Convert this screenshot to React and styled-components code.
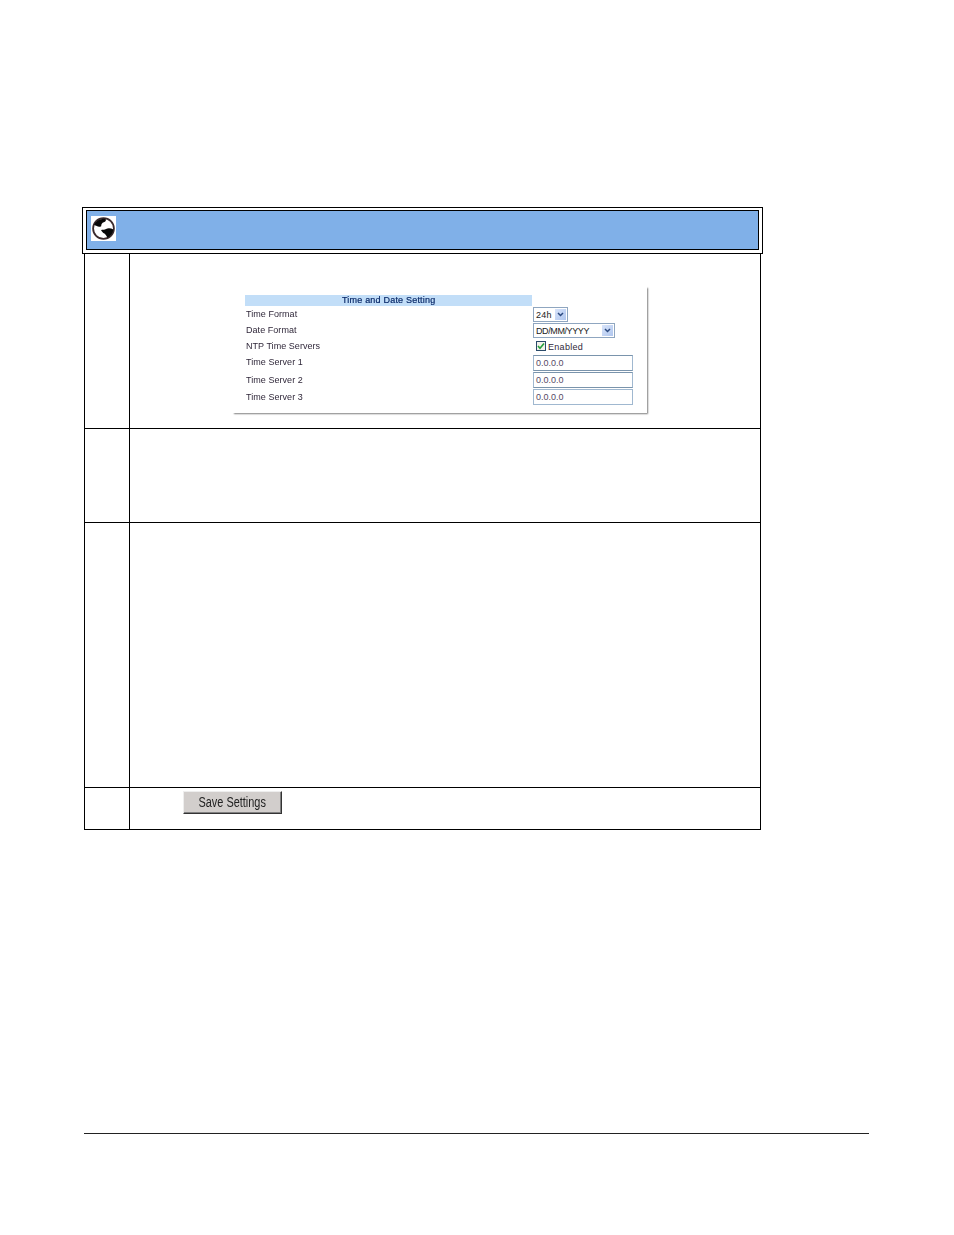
import React from "react";
import styled, { createGlobalStyle } from "styled-components";

const Global = createGlobalStyle`
  html, body { margin: 0; padding: 0; background: #fff; }
  body { font-family: "Liberation Sans", Arial, sans-serif; }
`;

const Page = styled.div`
  width: 954px;
  height: 1235px;
  box-sizing: border-box;
  padding: 207px 0 0 82px;
  display: flex;
  flex-direction: column;
`;

const HeaderFrame = styled.div`
  width: 681px;
  height: 47px;
  box-sizing: border-box;
  border: 1px solid #000;
  padding: 2px 3px 3px 3px;
`;

const HeaderBar = styled.div`
  height: 100%;
  box-sizing: border-box;
  border: 1px solid #000;
  background: #80b0e8;
  padding: 5px 4px;
  display: flex;
  align-items: flex-start;
`;

const Table = styled.div`
  width: 677px;
  margin-left: 2px;
  box-sizing: border-box;
  border-left: 1px solid #000;
  border-right: 1px solid #000;
`;

const Row = styled.div`
  height: ${(props) => props.h}px;
  box-sizing: border-box;
  border-bottom: 1px solid #000;
  display: grid;
  grid-template-columns: 45px 1fr;
`;

const StepCell = styled.div`
  border-right: 1px solid #000;
`;

const BodyCell = styled.div`
  padding: ${(props) => props.pad || "0"};
`;

const Card = styled.div`
  width: 415px;
  height: 127px;
  box-sizing: border-box;
  padding: 9px 0 0 13px;
  background: #fff;
  box-shadow: 1.5px 1.5px 1.5px -0.5px #808080;
  display: grid;
  grid-template-columns: 288px 1fr;
  grid-template-rows: 11px 17px 16px 16px 17px 17px 17px;
`;

const Banner = styled.div`
  width: 287px;
  background: #c2def8;
  color: #0a2a6a;
  font-size: 9px;
  line-height: 11px;
  letter-spacing: 0.2px;
  padding-left: 97px;
  box-sizing: border-box;
  -webkit-text-stroke: 0.2px #0a2a6a;
  white-space: nowrap;
  filter: blur(0.25px);
`;

const Label = styled.div`
  color: #30283a;
  font-size: 9px;
  letter-spacing: 0.05px;
  line-height: ${(props) => props.lh || 16}px;
  padding-left: 1px;
  white-space: nowrap;
  filter: blur(0.25px);
`;

const Control = styled.div`
  display: flex;
  align-items: flex-start;
  padding-top: ${(props) => props.top || 0}px;
`;

const Select = styled.div`
  width: ${(props) => props.w}px;
  height: 15px;
  box-sizing: border-box;
  border: 1px solid #8fa6c0;
  display: flex;
  align-items: center;
  justify-content: space-between;
  padding: 0 1px 0 2px;
  color: #222;
  font-size: 9px;
  letter-spacing: ${(props) => props.ls || 0}px;
  white-space: nowrap;
`;

const Arrow = styled.span`
  width: 11px;
  height: 11px;
  background: linear-gradient(135deg, #d8e4fa, #b0c6ee);
  display: flex;
  align-items: center;
  justify-content: center;
`;

const CheckLine = styled.div`
  display: flex;
  align-items: flex-start;
  gap: 2px;
  padding: 2px 0 0 3px;
  color: #30283a;
  font-size: 9px;
  letter-spacing: 0.3px;
  line-height: 12px;
`;

const CheckBox = styled.span`
  width: 10px;
  height: 10px;
  box-sizing: border-box;
  border: 1px solid #2a4a6a;
  background: #f2f2ea;
  display: flex;
  align-items: center;
  justify-content: center;
`;

const Field = styled.div`
  width: 100px;
  height: 16px;
  box-sizing: border-box;
  border: 1px solid #a0b8d0;
  border-bottom-color: ${(props) => (props.dark ? "#7a94ac" : "#a0b8d0")};
  border-top-color: ${(props) => (props.dark ? "#7a94ac" : "#a0b8d0")};
  padding-left: 2px;
  color: #554a66;
  font-size: 9px;
  line-height: 14px;
`;

const SaveButton = styled.button`
  width: 99px;
  height: 23px;
  box-sizing: border-box;
  margin: 0;
  padding: 0 0 1px;
  background: #d2cecc;
  border: 1px solid;
  border-color: #eeeeee #333333 #333333 #eeeeee;
  box-shadow: inset -1px -1px 0 #808080;
  color: #222;
  font-family: "Liberation Sans", Arial, sans-serif;
  font-size: 14px;
  cursor: pointer;
`;

const ButtonText = styled.span`
  display: inline-block;
  transform: scaleX(0.78);
  white-space: nowrap;
`;

const FooterRule = styled.div`
  width: 785px;
  height: 1px;
  margin: 303px 0 0 2px;
  background: #222;
`;

const Globe = () => (
  <svg width="25" height="25" viewBox="0 0 25 25" style={{ display: "block" }}>
    <rect width="25" height="25" fill="#fff" />
    <circle cx="12.5" cy="12.5" r="10.4" fill="#fff" stroke="#3a2a2c" strokeWidth="1.8" />
    <path d="M3 9 C5 4.5 9.5 2.5 14.5 2.8 C15.5 4.5 14.5 5.8 12.8 6.2 C11 6.8 10.2 8.2 10.2 10.2 C8.5 11.2 7 10.8 5.8 10 C5 9.6 4 9.2 3 9 Z" fill="#080808" />
    <path d="M10 14 C12 13.5 13.8 14 15 13 C16.8 11.8 19.8 12 22.4 13.4 C22 17 19.5 20.5 16.2 21.8 C15.6 19.8 14.5 18.6 13.4 17.6 C12 16.8 10.6 15.6 10 14 Z" fill="#080808" />
  </svg>
);

const Chevron = () => (
  <svg width="7" height="5" viewBox="0 0 7 5">
    <path d="M1 1 L3.5 3.5 L6 1" fill="none" stroke="#2c4a80" strokeWidth="1.5" />
  </svg>
);

const Tick = () => (
  <svg width="8" height="8" viewBox="0 0 8 8">
    <path d="M1 4 L3 6.2 L7 1.5" fill="none" stroke="#22a03a" strokeWidth="1.6" />
  </svg>
);

const App = () => {
  return (
    <Page>
      <Global />
      <HeaderFrame>
        <HeaderBar>
          <Globe />
        </HeaderBar>
      </HeaderFrame>
      <Table>
        <Row h={175}>
          <StepCell />
          <BodyCell pad="32px 0 0 102px">
            <Card>
              <Banner>Time and Date Setting</Banner>
              <span />
              <Label>Time Format</Label>
              <Control top={1}>
                <Select w={35} ls={0.2}>
                  24h
                  <Arrow><Chevron /></Arrow>
                </Select>
              </Control>
              <Label lh={14}>Date Format</Label>
              <Control>
                <Select w={82} ls={-0.4}>
                  DD/MM/YYYY
                  <Arrow><Chevron /></Arrow>
                </Select>
              </Control>
              <Label lh={14}>NTP Time Servers</Label>
              <Control>
                <CheckLine>
                  <CheckBox><Tick /></CheckBox>
                  Enabled
                </CheckLine>
              </Control>
              <Label lh={15}>Time Server 1</Label>
              <Control><Field dark>0.0.0.0</Field></Control>
              <Label>Time Server 2</Label>
              <Control><Field dark>0.0.0.0</Field></Control>
              <Label lh={17}>Time Server 3</Label>
              <Control><Field>0.0.0.0</Field></Control>
            </Card>
          </BodyCell>
        </Row>
        <Row h={94}>
          <StepCell />
          <BodyCell />
        </Row>
        <Row h={265}>
          <StepCell />
          <BodyCell />
        </Row>
        <Row h={42}>
          <StepCell />
          <BodyCell pad="3px 0 0 53px">
            <SaveButton><ButtonText>Save Settings</ButtonText></SaveButton>
          </BodyCell>
        </Row>
      </Table>
      <FooterRule />
    </Page>
  );
};

export default App;
